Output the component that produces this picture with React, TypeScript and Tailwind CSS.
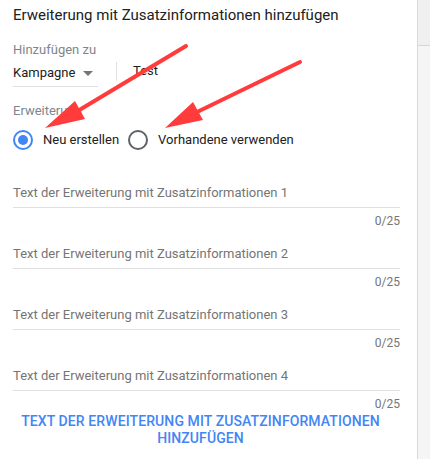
import React from "react";

function Field({ n }: { n: number }) {
  return (
    <div className="flex flex-col">
      <div className="h-[33px] flex items-end pb-[5px] border-b border-[#e0e0e0] text-[13px] leading-[18px] text-[#757575]">
        Text der Erweiterung mit Zusatzinformationen {n}
      </div>
      <div className="h-[28px] pt-[4px] text-right text-[12px] text-[#757575] leading-[18px]">0/25</div>
    </div>
  );
}

export default function App() {
  return (
    <div className="relative w-[430px] h-[459px] overflow-hidden bg-white flex" style={{ fontFamily: "Roboto, 'Liberation Sans', sans-serif" }}>
      <div className="w-[417px] h-full flex flex-col pl-[13px] pr-[17px]">
        <div className="pt-[4px] text-[15px] leading-[22px] text-[#212121]">Erweiterung mit Zusatzinformationen hinzufügen</div>
        <div className="mt-[15px] text-[13px] leading-[18px] text-[#80868b]">Hinzufügen zu</div>
        <div className="flex items-center h-[28px]">
          <div className="w-[85px] h-full flex items-center border-b border-[#e0e0e0] text-[13px] text-[#212121]">
            Kampagne
            <svg width="10" height="5" viewBox="0 0 10 5" className="ml-[8px] mt-[1px]"><path d="M0 0 L10 0 L5 5 Z" fill="#757575" /></svg>
          </div>
          <div className="ml-[18px] w-px h-[19px] bg-[#e0e0e0] -mt-[4px]" />
          <div className="ml-[16px] text-[13px] text-[#212121] -mt-[4px]">Test</div>
        </div>
        <div className="mt-[15px] text-[13px] leading-[18px] text-[#80868b]">Erweiterung</div>
        <div className="mt-[9px] flex items-center h-[22px] text-[13px] text-[#212121]">
          <svg width="22" height="22" viewBox="0 0 22 22" className="-ml-[1px]">
            <circle cx="11" cy="11" r="9" fill="none" stroke="#4285f4" strokeWidth="2" />
            <circle cx="11" cy="11" r="5" fill="#4285f4" />
          </svg>
          <span className="ml-[9px]">Neu erstellen</span>
          <svg width="22" height="22" viewBox="0 0 22 22" className="ml-[8px]">
            <circle cx="11" cy="11" r="9" fill="none" stroke="#5f6368" strokeWidth="2" />
          </svg>
          <span className="ml-[9px]">Vorhandene verwenden</span>
        </div>
        <div className="mt-[24px] flex flex-col">
          <Field n={1} />
          <Field n={2} />
          <Field n={3} />
          <Field n={4} />
        </div>
        <div className="-mt-[6px] text-center text-[14px] leading-[17px] font-medium text-[#4285f4] pr-[12px] tracking-[0.1px]">
          TEXT DER ERWEITERUNG MIT ZUSATZINFORMATIONEN
          <br />
          HINZUFÜGEN
        </div>
      </div>
      <div className="flex-1 h-full border-l border-[#dadada] flex flex-col">
        <div className="h-[46px] bg-[#f0f0f0] border-b border-[#d6d6d6]" />
        <div className="flex-1 bg-[#f5f5f5]" />
      </div>
      <svg className="absolute left-0 top-0 pointer-events-none" width="430" height="459" viewBox="0 0 430 459">
        <line x1="186" y1="46" x2="76" y2="112" stroke="#ff3b3b" strokeWidth="4" strokeLinecap="round" />
        <polygon points="45,128 75,101 85,119" fill="#ff3b3b" />
        <line x1="300" y1="62" x2="195" y2="113" stroke="#ff3b3b" strokeWidth="4" strokeLinecap="round" />
        <polygon points="165,128 193,102 203,120" fill="#ff3b3b" />
      </svg>
    </div>
  );
}
